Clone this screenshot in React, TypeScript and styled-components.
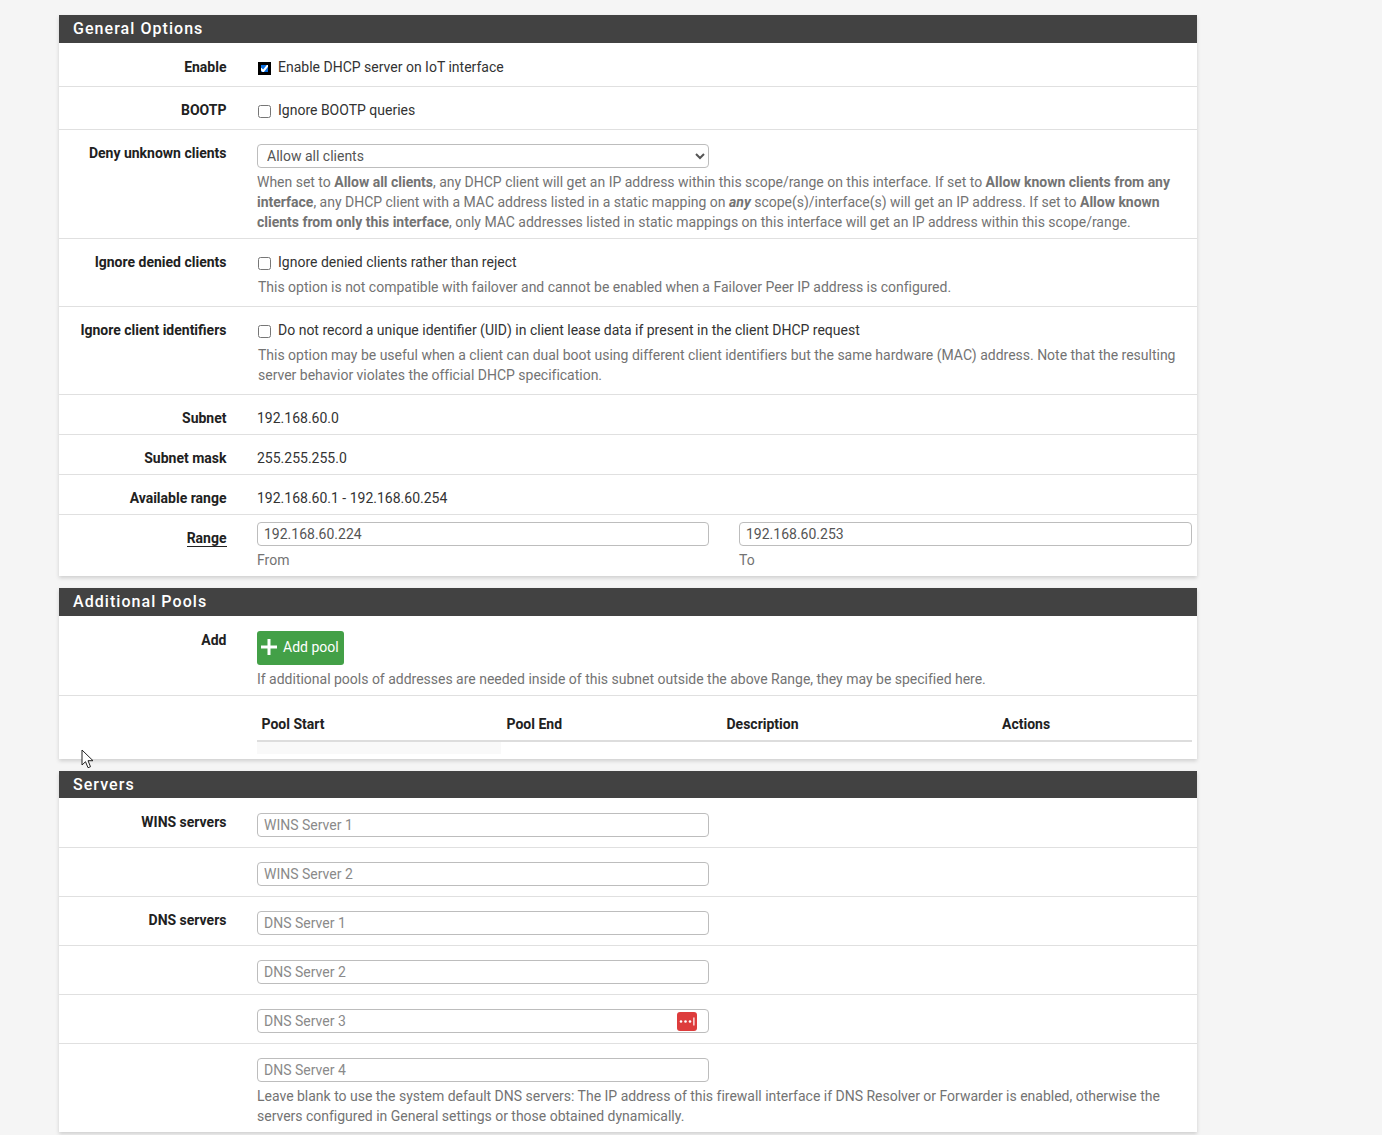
import React from 'react';
import styled, { createGlobalStyle } from 'styled-components';

const GlobalStyle = createGlobalStyle`
  html, body {
    margin: 0;
    height: 100%;
    overflow: hidden;
    background: #f5f5f5;
  }
  body {
    font-family: Roboto, "Liberation Sans", sans-serif;
    font-size: 14px;
    line-height: 20px;
    color: #212121;
  }
`;

const Page = styled.div`
  position: relative;
  width: 1138px;
  padding: 15px 0 0 59px;
`;

const Panel = styled.section`
  background: #fff;
  margin-bottom: 12px;
  box-shadow: 0 2px 4px rgba(0, 0, 0, 0.16);
`;

const Heading = styled.h2<{ $short?: boolean }>`
  margin: 0;
  height: ${p => (p.$short ? 27 : 28)}px;
  padding-left: 14px;
  background: #424242;
  color: #fff;
  font-size: 16px;
  font-weight: 500;
  letter-spacing: 1.05px;
  line-height: 28px;
`;

const Row = styled.div<{ $h: number; $last?: boolean; $top?: number }>`
  box-sizing: border-box;
  height: ${p => p.$h}px;
  display: grid;
  grid-template-columns: 167.5px 1fr;
  column-gap: 30.5px;
  padding: ${p => p.$top ?? 14}px 5px 0 0;
  border-bottom: ${p => (p.$last ? 'none' : '1px solid #e0e0e0')};
`;

const Label = styled.div<{ $offset?: number }>`
  text-align: right;
  font-weight: 700;
  margin-top: ${p => p.$offset ?? -1}px;
`;

const Abbr = styled.span`
  border-bottom: 1px solid #212121;
`;

const CheckLine = styled.label`
  display: flex;
  align-items: center;
  height: 20px;
  color: #333;
`;

const Check = styled.input.attrs({ type: 'checkbox' })`
  width: 13px;
  height: 13px;
  margin: 2px 7px 0 1px;
`;

const FocusBox = styled.span`
  display: flex;
  width: 13px;
  height: 13px;
  margin: 2px 7px 0 1px;
  background: #5a9be0;
`;

const FocusedCheck = styled.input.attrs({ type: 'checkbox' })`
  width: 13px;
  height: 13px;
  margin: 0;
  accent-color: #0b6fe0;
  border-radius: 3px;
  outline: 3px solid #000;
  outline-offset: -3px;
`;

const Help = styled.div<{ $top?: number; $indent?: number }>`
  margin-top: ${p => p.$top ?? 5}px;
  padding-left: ${p => p.$indent ?? 0}px;
  color: #737373;
  letter-spacing: -0.01px;
  b {
    font-weight: 700;
  }
`;

const Select = styled.select`
  display: block;
  box-sizing: border-box;
  width: 452px;
  height: 24px;
  padding: 0 0 0 5px;
  background: #fff;
  border: 1px solid #bdbdbd;
  border-radius: 4px;
  color: #555;
  font: 14px Roboto, sans-serif;
`;

const FieldWrap = styled.div`
  position: relative;
  width: 452px;
`;

const Input = styled.input`
  display: block;
  box-sizing: border-box;
  width: 100%;
  height: 24px;
  padding: 0 6px;
  background: #fff;
  border: 1px solid #bdbdbd;
  border-radius: 4px;
  color: #555;
  font: 14px Roboto, sans-serif;
  &::placeholder {
    color: #8a8a8a;
    opacity: 1;
  }
`;

const Plain = styled.div`
  margin-top: -1px;
  color: #333;
`;

const RangeGrid = styled.div`
  display: grid;
  grid-template-columns: 452px 453px;
  column-gap: 30px;
`;

const Caption = styled.div`
  margin-top: 4px;
  color: #737373;
`;

const GreenButton = styled.button`
  display: flex;
  align-items: center;
  gap: 6px;
  box-sizing: border-box;
  width: 87px;
  height: 34px;
  padding: 0 0 2px 4px;
  background: #43a047;
  border: none;
  border-radius: 3px;
  color: #fff;
  font: 14px Roboto, sans-serif;
`;

const PoolTable = styled.div`
  display: grid;
  grid-template-columns: 245px 220px 275.5px 1fr;
  border-bottom: 2px solid #ddd;
  height: 26px;
  padding-top: 8px;
`;

const PoolHead = styled.div`
  padding-left: 4.500px;
  font-weight: 700;
`;

const EmptyCell = styled.div`
  width: 244px;
  height: 12px;
  background: #f9f9f9;
`;

const ManagerBadge = styled.span`
  position: absolute;
  top: 3px;
  right: 12px;
  width: 20px;
  height: 19px;
  display: flex;
  align-items: center;
  justify-content: center;
  background: #dd3c3c;
  border-radius: 3px;
`;

const Cursor = styled.svg`
  position: absolute;
  left: 81px;
  top: 749px;
`;

const PlusIcon = () => (
  <svg width="16" height="16" viewBox="0 0 16 16">
    <path d="M6.5 0h3v6.500h6.500v3H9.500V16h-3V9.500H0v-3h6.500z" fill="#fff" />
  </svg>
);

const DotsIcon = () => (
  <svg width="16" height="9" viewBox="0 0 16 9">
    <circle cx="2" cy="4.500" r="1.300" fill="#fff" />
    <circle cx="6.500" cy="4.500" r="1.300" fill="#fff" />
    <circle cx="11" cy="4.500" r="1.300" fill="#fff" />
    <rect x="14" y="0.500" width="1.700" height="8" fill="#f6c6c6" />
  </svg>
);

const dnsNames = ['DNS Server 2'];

export default function App() {
  return (
    <Page>
      <GlobalStyle />
      <Panel>
        <Heading>General Options</Heading>
        <Row $h={44}>
          <Label $offset={0}>Enable</Label>
          <CheckLine>
            <FocusBox>
              <FocusedCheck defaultChecked />
            </FocusBox>
            Enable DHCP server on IoT interface
          </CheckLine>
        </Row>
        <Row $h={43} $top={13}>
          <Label $offset={0}>BOOTP</Label>
          <CheckLine>
            <Check />
            Ignore BOOTP queries
          </CheckLine>
        </Row>
        <Row $h={109}>
          <Label>Deny unknown clients</Label>
          <div>
            <Select defaultValue="all">
              <option value="all">Allow all clients</option>
            </Select>
            <Help $top={4}>
              When set to <b>Allow all clients</b>, any DHCP client will get an IP address within this scope/range on this interface. If set to <b>Allow known clients from any interface</b>, any DHCP client with a MAC address listed in a static mapping on <b><i>any</i></b> scope(s)/interface(s) will get an IP address. If set to <b>Allow known clients from only this interface</b>, only MAC addresses listed in static mappings on this interface will get an IP address within this scope/range.
            </Help>
          </div>
        </Row>
        <Row $h={68} $top={13}>
          <Label $offset={0}>Ignore denied clients</Label>
          <div>
            <CheckLine>
              <Check />
              Ignore denied clients rather than reject
            </CheckLine>
            <Help $indent={1}>This option is not compatible with failover and cannot be enabled when a Failover Peer IP address is configured.</Help>
          </div>
        </Row>
        <Row $h={88} $top={13}>
          <Label $offset={0}>Ignore client identifiers</Label>
          <div>
            <CheckLine>
              <Check />
              Do not record a unique identifier (UID) in client lease data if present in the client DHCP request
            </CheckLine>
            <Help $indent={1}>This option may be useful when a client can dual boot using different client identifiers but the same hardware (MAC) address. Note that the resulting server behavior violates the official DHCP specification.</Help>
          </div>
        </Row>
        <Row $h={40}>
          <Label>Subnet</Label>
          <Plain>192.168.60.0</Plain>
        </Row>
        <Row $h={40}>
          <Label>Subnet mask</Label>
          <Plain>255.255.255.0</Plain>
        </Row>
        <Row $h={40}>
          <Label>Available range</Label>
          <Plain>192.168.60.1 - 192.168.60.254</Plain>
        </Row>
        <Row $h={61} $last $top={7}>
          <Label $offset={6}>
            <Abbr>Range</Abbr>
          </Label>
          <RangeGrid>
            <div>
              <Input defaultValue="192.168.60.224" />
              <Caption>From</Caption>
            </div>
            <div>
              <Input defaultValue="192.168.60.253" />
              <Caption>To</Caption>
            </div>
          </RangeGrid>
        </Row>
      </Panel>

      <Panel>
        <Heading>Additional Pools</Heading>
        <Row $h={80} $top={15}>
          <Label>Add</Label>
          <div>
            <GreenButton>
              <PlusIcon />
              Add pool
            </GreenButton>
            <Help $top={4}>If additional pools of addresses are needed inside of this subnet outside the above Range, they may be specified here.</Help>
          </div>
        </Row>
        <Row $h={63} $last $top={10}>
          <div />
          <div>
            <PoolTable>
              <PoolHead>Pool Start</PoolHead>
              <PoolHead>Pool End</PoolHead>
              <PoolHead>Description</PoolHead>
              <PoolHead>Actions</PoolHead>
            </PoolTable>
            <EmptyCell />
          </div>
        </Row>
      </Panel>

      <Panel>
        <Heading $short>Servers</Heading>
        <Row $h={50} $top={15}>
          <Label>WINS servers</Label>
          <FieldWrap>
            <Input placeholder="WINS Server 1" />
          </FieldWrap>
        </Row>
        <Row $h={49}>
          <div />
          <FieldWrap>
            <Input placeholder="WINS Server 2" />
          </FieldWrap>
        </Row>
        <Row $h={49}>
          <Label>DNS servers</Label>
          <FieldWrap>
            <Input placeholder="DNS Server 1" />
          </FieldWrap>
        </Row>
        {dnsNames.map(name => (
          <Row $h={49} key={name}>
            <div />
            <FieldWrap>
              <Input placeholder={name} />
            </FieldWrap>
          </Row>
        ))}
        <Row $h={49}>
          <div />
          <FieldWrap>
            <Input placeholder="DNS Server 3" />
            <ManagerBadge>
              <DotsIcon />
            </ManagerBadge>
          </FieldWrap>
        </Row>
        <Row $h={88} $last>
          <div />
          <div>
            <FieldWrap>
              <Input placeholder="DNS Server 4" />
            </FieldWrap>
            <Help $top={4}>Leave blank to use the system default DNS servers: The IP address of this firewall interface if DNS Resolver or Forwarder is enabled, otherwise the servers configured in General settings or those obtained dynamically.</Help>
          </div>
        </Row>
      </Panel>

      <Cursor width="14" height="20" viewBox="0 0 14 20">
        <path d="M1 1v15l3.500-3.300 2.500 6 2.500-1-2.500-6h5z" fill="#fff" stroke="#222" strokeWidth="1" />
      </Cursor>
    </Page>
  );
}
